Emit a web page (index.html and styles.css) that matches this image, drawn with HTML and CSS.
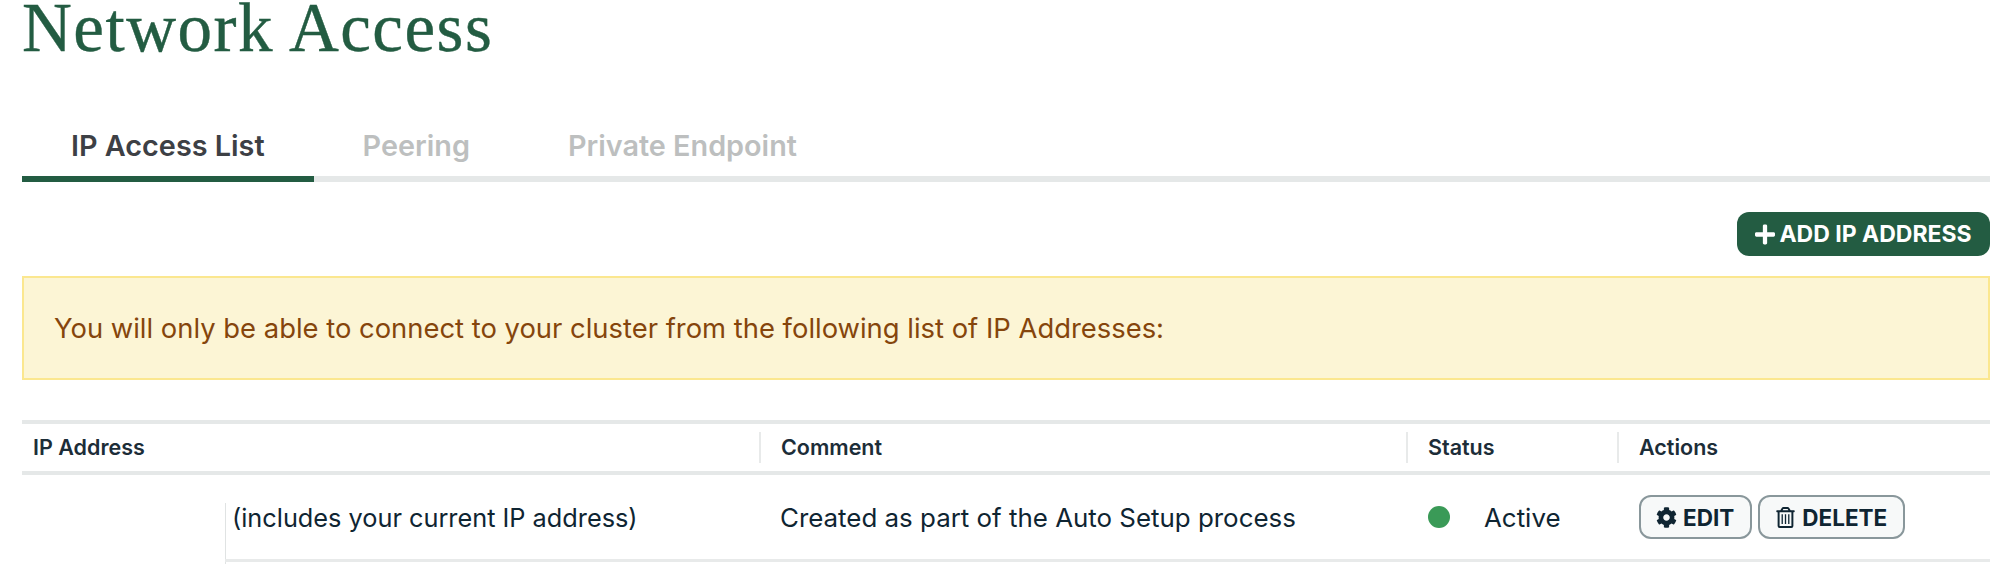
FILE: index.html
```html
<!DOCTYPE html>
<html lang="en">

<head>
    <meta charset="UTF-8">
    <meta name="viewport" content="width=device-width, initial-scale=1.0">
    <title>Network Access</title>
    <link rel="stylesheet" href="styles.css">
</head>

<body>

    <h1 class="page-title">Network Access</h1>

    <nav class="tabs">
        <a class="tab tab-active">IP Access List</a>
        <a class="tab">Peering</a>
        <a class="tab">Private Endpoint</a>
    </nav>

    <div class="toolbar">
        <button class="btn-add" type="button">
            <svg class="icon" viewBox="0 0 448 512"><path d="M416 208H272V64c0-17.67-14.33-32-32-32h-32c-17.67 0-32 14.33-32 32v144H32c-17.67 0-32 14.33-32 32v32c0 17.67 14.33 32 32 32h144v144c0 17.67 14.33 32 32 32h32c17.67 0 32-14.33 32-32V304h144c17.67 0 32-14.33 32-32v-32c0-17.67-14.33-32-32-32z"/></svg>
            ADD IP ADDRESS
        </button>
    </div>

    <div class="notice">You will only be able to connect to your cluster from the following list of IP Addresses:</div>

    <div class="ip-table">
        <div class="head-row">
            <div class="head-cell">IP Address</div>
            <div class="head-cell head-split">Comment</div>
            <div class="head-cell head-split">Status</div>
            <div class="head-cell head-split">Actions</div>
        </div>
        <div class="row">
            <div class="cell-blank"></div>
            <div class="cell cell-ip">(includes your current IP address)</div>
            <div class="cell cell-comment">Created as part of the Auto Setup process</div>
            <div class="cell cell-status"><span class="dot"></span>Active</div>
            <div class="cell cell-actions">
                <button class="btn-row" type="button">
                    <svg class="icon" viewBox="0 0 512 512"><path d="M487.4 315.7l-42.6-24.6c4.3-23.2 4.3-47 0-70.2l42.6-24.6c4.9-2.8 7.1-8.6 5.5-14-11.1-35.6-30-67.8-54.7-94.6-3.8-4.1-10-5.1-14.8-2.3L380.8 110c-17.9-15.4-38.5-27.3-60.8-35.1V25.8c0-5.6-3.9-10.5-9.4-11.7-36.7-8.2-74.3-7.8-109.2 0-5.5 1.2-9.4 6.1-9.4 11.7V75c-22.2 7.9-42.8 19.8-60.8 35.1L88.7 85.5c-4.9-2.8-11-1.9-14.8 2.3-24.7 26.7-43.6 58.9-54.7 94.6-1.7 5.4.6 11.2 5.5 14L67.3 221c-4.3 23.2-4.3 47 0 70.2l-42.6 24.6c-4.9 2.8-7.1 8.6-5.5 14 11.1 35.6 30 67.8 54.7 94.6 3.8 4.1 10 5.1 14.8 2.3l42.6-24.6c17.9 15.4 38.5 27.3 60.8 35.1v49.2c0 5.6 3.9 10.5 9.4 11.7 36.7 8.2 74.3 7.8 109.2 0 5.5-1.2 9.4-6.1 9.4-11.7v-49.2c22.2-7.9 42.8-19.8 60.8-35.1l42.6 24.6c4.9 2.8 11 1.9 14.8-2.3 24.7-26.7 43.6-58.9 54.7-94.6 1.5-5.5-.7-11.3-5.6-14.1zM256 336c-44.1 0-80-35.9-80-80s35.9-80 80-80 80 35.9 80 80-35.9 80-80 80z"/></svg>
                    EDIT
                </button>
                <button class="btn-row" type="button">
                    <svg class="icon" viewBox="0 0 448 512"><path d="M432 80h-82.41l-34-56.7A48 48 0 0 0 274.41 0H173.59a48 48 0 0 0-41.16 23.3L98.41 80H16A16 16 0 0 0 0 96v16a16 16 0 0 0 16 16h16v336a48 48 0 0 0 48 48h288a48 48 0 0 0 48-48V128h16a16 16 0 0 0 16-16V96a16 16 0 0 0-16-16zM171.84 50.91A6 6 0 0 1 177 48h94a6 6 0 0 1 5.15 2.91L293.61 80H154.39zM368 464H80V128h288zM128 176h32v240h-32zM208 176h32v240h-32zM288 176h32v240h-32z"/></svg>
                    DELETE
                </button>
            </div>
        </div>
        <div class="row row-next">
            <div class="cell-blank"></div>
            <div class="cell-rest"></div>
        </div>
    </div>

</body>

</html>
```
FILE: styles.css
```css
html,
body {
    height: 564px;
    overflow: hidden;
}

body {
    font-family: 'Inter', sans-serif;
    background-color: #fff;
    color: #0f2532;
    margin: 0;
    padding: 0 22px;
}

button {
    font-family: inherit;
    cursor: pointer;
}

.icon {
    fill: currentColor;
    flex: none;
}

.page-title {
    font-family: 'Liberation Serif', serif;
    font-size: 69px;
    font-weight: 400;
    letter-spacing: 1.5px;
    line-height: 57px;
    height: 60px;
    margin: 0 0 62px;
    color: #235c42;
    -webkit-text-stroke: 0.4px #235c42;
}

.tabs {
    display: flex;
    border-bottom: 6px solid #e5e8e8;
    height: 54px;
}

.tab {
    font-size: 28.8px;
    font-weight: 600;
    line-height: 30px;
    padding: 9px 49px 0;
    margin-bottom: -6px;
    color: #bdbfbf;
}

.tab-active {
    color: #3d4045;
    border-bottom: 6px solid #235c42;
}

.toolbar {
    display: flex;
    justify-content: flex-end;
    margin-top: 30px;
}

.btn-add {
    display: flex;
    align-items: center;
    justify-content: center;
    gap: 4px;
    width: 253px;
    height: 44px;
    padding: 0;
    border: none;
    border-radius: 12px;
    background-color: #235c42;
    color: #fff;
    font-size: 23px;
    font-weight: 700;
}

.btn-add .icon {
    width: 20px;
    height: 23px;
}

.notice {
    margin-top: 20px;
    height: 104px;
    box-sizing: border-box;
    padding: 0 30px;
    display: flex;
    align-items: center;
    background-color: #fcf5d5;
    border: 2px solid #fbe78f;
    color: #85450c;
    font-size: 27.4px;
}

.ip-table {
    margin-top: 40px;
    border-top: 4px solid #e5e8e8;
}

.head-row {
    display: grid;
    grid-template-columns: 737px 647px 211px 373px;
    padding: 8px 0;
    border-bottom: 4px solid #e5e8e8;
}

.head-cell {
    height: 31px;
    line-height: 31px;
    padding-left: 11px;
    font-size: 21.5px;
    font-weight: 600;
    color: #1c2d38;
}

.head-split {
    padding-left: 20px;
    border-left: 2px solid #e8eaea;
}

.row {
    display: grid;
    grid-template-columns: 203px 534px 647px 211px 373px;
    height: 87px;
}

.cell {
    display: flex;
    align-items: center;
    height: 87px;
    box-sizing: border-box;
    border-bottom: 3px solid #e8eaea;
    font-size: 25.9px;
    color: #0f2532;
}

/* thin rule on the left of the address cell, starts below the top of the row */
.cell-ip {
    padding-left: 7px;
    font-size: 25.3px;
    background: linear-gradient(#e0e3e3, #e0e3e3) no-repeat 0 28px / 1px 59px;
    background-origin: border-box;
}

.row-next {
    height: 2px;
}

.cell-rest {
    height: 2px;
    background-color: #e0e3e3;
    width: 1px;
}

.cell-comment {
    padding-left: 21px;
}

.cell-status {
    padding-left: 22px;
}

.dot {
    width: 22px;
    height: 22px;
    border-radius: 50%;
    background-color: #3a9a57;
    margin-right: 34px;
}

.cell-actions {
    gap: 6px;
    padding-left: 22px;
}

.btn-row {
    display: flex;
    align-items: center;
    gap: 6px;
    height: 44px;
    padding: 0 16px 0 15px;
    border: 2px solid #89979b;
    border-radius: 12px;
    background-color: #f7f9f9;
    color: #0f2532;
    font-size: 22.5px;
    font-weight: 700;
}

.btn-row .icon {
    width: 21px;
    height: 21px;
}
```
